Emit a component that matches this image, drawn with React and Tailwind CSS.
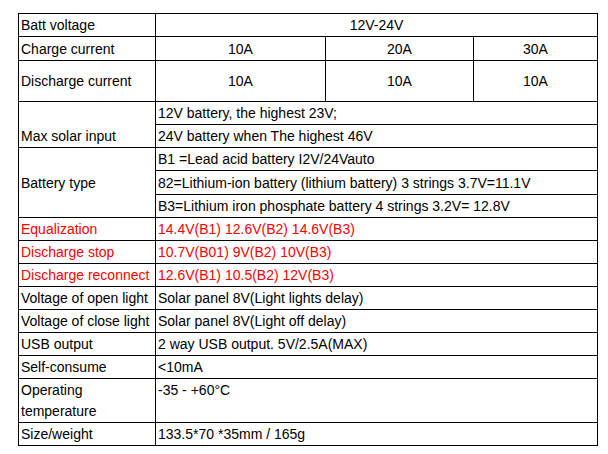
const cell = 'border border-black px-[2px] pt-px pb-0 align-middle';

const Row = ({ label, value, red = false }) => (
    <tr>
        <td className={`${cell} ${red ? 'text-[#ff0000]' : ''}`}>{label}</td>
        <td colSpan={3} className={`${cell} ${red ? 'text-[#ff0000]' : ''}`}>{value}</td>
    </tr>
);

const App = () => {
    return (
        <div className="min-h-screen bg-white pl-[18px] pt-[13px] font-['Liberation_Sans',Arial,sans-serif] text-[14px] leading-[21px] text-black">
            <table className="table-fixed border-collapse w-[579px]">
                <colgroup>
                    <col className="w-[137px]" />
                    <col className="w-[170px]" />
                    <col className="w-[148px]" />
                    <col className="w-[124px]" />
                </colgroup>
                <tbody>
                    <tr>
                        <td className={cell}>Batt voltage</td>
                        <td colSpan={3} className={`${cell} text-center`}>12V-24V</td>
                    </tr>
                    <tr className="h-[24px]">
                        <td className={cell}>Charge current</td>
                        <td className={`${cell} text-center`}>10A</td>
                        <td className={`${cell} text-center`}>20A</td>
                        <td className={`${cell} text-center`}>30A</td>
                    </tr>
                    <tr className="h-[41px]">
                        <td className={cell}>Discharge current</td>
                        <td className={`${cell} text-center`}>10A</td>
                        <td className={`${cell} text-center`}>10A</td>
                        <td className={`${cell} text-center`}>10A</td>
                    </tr>
                    <tr>
                        <td rowSpan={2} className={`${cell} !align-bottom`}>Max solar input</td>
                        <td colSpan={3} className={cell}>12V battery, the highest 23V;</td>
                    </tr>
                    <tr>
                        <td colSpan={3} className={cell}>24V battery when The highest 46V</td>
                    </tr>
                    <tr>
                        <td rowSpan={3} className={cell}>Battery type</td>
                        <td colSpan={3} className={cell}>B1 =Lead acid battery I2V/24Vauto</td>
                    </tr>
                    <tr className="h-[24px]">
                        <td colSpan={3} className={cell}>82=Lithium-ion battery (lithium battery) 3 strings 3.7V=11.1V</td>
                    </tr>
                    <tr>
                        <td colSpan={3} className={cell}>B3=Lithium iron phosphate battery 4 strings 3.2V= 12.8V</td>
                    </tr>
                    <Row red label="Equalization" value="14.4V(B1) 12.6V(B2) 14.6V(B3)" />
                    <Row red label="Discharge stop" value="10.7V(B01) 9V(B2) 10V(B3)" />
                    <Row red label="Discharge reconnect" value="12.6V(B1) 10.5(B2) 12V(B3)" />
                    <Row label="Voltage of open light" value="Solar panel 8V(Light lights delay)" />
                    <Row label="Voltage of close light" value="Solar panel 8V(Light off delay)" />
                    <Row label="USB output" value="2 way USB output. 5V/2.5A(MAX)" />
                    <Row label="Self-consume" value="<10mA" />
                    <tr>
                        <td className={`${cell} !align-top`}>Operating temperature</td>
                        <td colSpan={3} className={`${cell} !align-top`}>-35 - +60°C</td>
                    </tr>
                    <Row label="Size/weight" value="133.5*70 *35mm / 165g" />
                </tbody>
            </table>
        </div>
    );
};

export default App;
